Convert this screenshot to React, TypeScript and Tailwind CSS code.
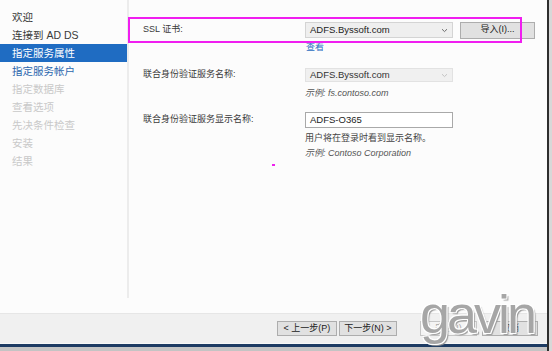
import React from "react";

const Chevron = ({ color = "#6d6d6d" }: { color?: string }) => (
  <svg width="7" height="5" viewBox="0 0 7 5" className="shrink-0">
    <path d="M1 1.2 L3.5 3.6 L6 1.2" fill="none" stroke={color} strokeWidth="1" />
  </svg>
);

const navItems: { label: string; kind: "done" | "sel" | "next" | "off" }[] = [
  { label: "欢迎", kind: "done" },
  { label: "连接到 AD DS", kind: "done" },
  { label: "指定服务属性", kind: "sel" },
  { label: "指定服务帐户", kind: "next" },
  { label: "指定数据库", kind: "off" },
  { label: "查看选项", kind: "off" },
  { label: "先决条件检查", kind: "off" },
  { label: "安装", kind: "off" },
  { label: "结果", kind: "off" },
];

export default function App() {
  return (
    <div
      className="relative w-[552px] h-[351px] overflow-hidden bg-[#fcfcfc] flex flex-row"
      style={{ fontFamily: '"Liberation Sans", "Noto Sans CJK SC", sans-serif' }}
    >
      <div className="w-[547px] h-full flex flex-col">
        {/* body */}
        <div className="h-[313px] flex flex-row">
          {/* nav */}
          <div className="w-[127px] pt-[8px] flex flex-col">
            {navItems.map((it) => (
              <div
                key={it.label}
                className={
                  "h-[18px] leading-[18px] pl-[12px] text-[10.5px] whitespace-nowrap " +
                  (it.kind === "sel"
                    ? "bg-[#1f6cc2] text-white"
                    : it.kind === "next"
                    ? "text-[#2a66ad]"
                    : it.kind === "done"
                    ? "text-[#3a3a3a]"
                    : "text-[#c9c9c9]")
                }
              >
                {it.label}
              </div>
            ))}
          </div>
          {/* divider */}
          <div className="w-[2px] h-[298px] bg-[#ececec]" />
          {/* content */}
          <div className="flex-1 flex flex-col pl-[14px] pt-[22px] text-[9px] text-[#3a3a3a]">
            <div className="flex flex-row items-center h-[16px]">
              <div className="w-[162px]">SSL 证书:</div>
              <div className="w-[148px] h-[16px] bg-[#efefef] border border-[#d4d4d4] flex flex-row items-center pl-[4px] pr-[4px] text-[9.5px] text-[#222]">
                <span className="flex-1">ADFS.Byssoft.com</span>
                <Chevron />
              </div>
              <div className="ml-[7px] w-[75px] h-[17px] bg-[#e1e1e1] border border-[#adadad] flex items-center justify-center text-[9px] text-[#222]">
                导入(I)...
              </div>
            </div>
            <div className="mt-[3px] h-[12px] leading-[12px] pl-[162px] text-[#2a6dc0]">
              <span className="ml-[1px]">查看</span>
            </div>
            <div className="mt-[15px] flex flex-row items-center h-[14px]">
              <div className="w-[162px]">联合身份验证服务名称:</div>
              <div className="w-[148px] h-[14px] bg-[#f0f0f0] border border-[#e2e2e2] flex flex-row items-center pl-[4px] pr-[4px] text-[9.5px] text-[#333]">
                <span className="flex-1">ADFS.Byssoft.com</span>
                <Chevron color="#c4c4c4" />
              </div>
            </div>
            <div className="mt-[5px] h-[12px] leading-[12px] pl-[162px] italic text-[#555]">
              示例: fs.contoso.com
            </div>
            <div className="mt-[13px] flex flex-row items-center h-[16px]">
              <div className="w-[162px]">联合身份验证服务显示名称:</div>
              <div className="w-[148px] h-[16px] bg-white border border-[#a9a9a9] flex items-center pl-[4px] text-[9.5px] text-[#222]">
                ADFS-O365
              </div>
            </div>
            <div className="mt-[4px] h-[12px] leading-[12px] pl-[162px] text-[#444]">
              用户将在登录时看到显示名称。
            </div>
            <div className="mt-[3px] h-[12px] leading-[12px] pl-[162px] italic text-[#555]">
              示例: Contoso Corporation
            </div>
          </div>
        </div>
        {/* footer */}
        <div className="h-[30px] bg-[#f0f0f0] border-t border-[#e6e6e6] flex flex-row items-center pl-[277px] text-[9px] text-[#222]">
          <div className="w-[60px] h-[15px] bg-[#e1e1e1] border border-[#adadad] flex items-center justify-center">
            &lt; 上一步(P)
          </div>
          <div className="ml-[2px] w-[58px] h-[15px] bg-[#e1e1e1] border border-[#adadad] flex items-center justify-center">
            下一步(N) &gt;
          </div>
          <div className="ml-[23px] w-[57px] h-[15px] bg-[#f4f4f4] border border-[#c6c6c6] flex items-center justify-center text-[#a8a8a8]">
            安装(I)
          </div>
          <div className="ml-[5px] w-[56px] h-[15px] bg-[#e1e1e1] border border-[#adadad] flex items-center justify-center">
            取消
          </div>
        </div>
        {/* bottom frame */}
        <div className="h-[1px] bg-[#f8f8f8]" />
        <div className="h-[3px] bg-[#1d3b63]" />
        <div className="flex-1 bg-[#c4c4c4]" />
      </div>
      <div className="w-[2px] h-full bg-[#2e2e2e]" />
      <div className="flex-1 h-full bg-[#d8d8d8]" />

      {/* annotation box */}
      <div className="absolute left-[128px] top-[17px] w-[394px] h-[26px] border-2 border-[#f01ef0]" />
      <div className="absolute left-[272px] top-[164px] w-[3px] h-[2px] bg-[#ee22ee]" />

      {/* watermark */}
      <div
        className="absolute left-[420px] top-[287px] text-[54px] leading-[54px] text-[#a6a6a6] tracking-[-3px] [text-shadow:1px_1px_0_#ffffff,-1px_-1px_0_#ffffff,1px_-1px_0_#ffffff,-1px_1px_0_#ffffff,2px_2px_1px_#9a9a9a]"
        style={{ fontFamily: '"Liberation Sans", sans-serif', fontWeight: 400 }}
      >
        gavin
      </div>
    </div>
  );
}
